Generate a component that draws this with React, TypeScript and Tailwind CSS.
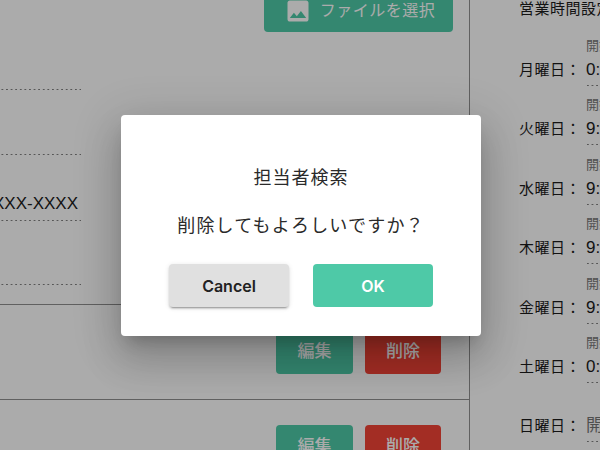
const FONT = "font-['Liberation_Sans','Noto_Sans_CJK_JP',sans-serif]";
const DOTS = "bg-[linear-gradient(to_right,#808080_2px,transparent_2px)] bg-[length:4.6px_1px] bg-bottom bg-repeat-x";

const days = [
  { name: "月曜日", time: "0:00" },
  { name: "火曜日", time: "9:00" },
  { name: "水曜日", time: "9:00" },
  { name: "木曜日", time: "9:00" },
  { name: "金曜日", time: "9:00" },
  { name: "土曜日", time: "0:00" },
];

function FieldLine({ height }: { height: string }) {
  return <div className={`${height} w-[81px] ${DOTS}`} />;
}

function RowActions() {
  return (
    <div className="h-[94.6px] border-t border-[#8f8f8f] pt-[25.6px] pr-[28px] flex justify-end gap-3">
      <button className="w-[77px] h-[43px] rounded bg-[#4ec9a7] text-white text-[17px] font-medium">編集</button>
      <button className="w-[76px] h-[43px] rounded bg-[#f44336] text-white text-[17px] font-medium">削除</button>
    </div>
  );
}

function DayRow({ name, time }: { name: string; time: string }) {
  return (
    <div className="h-[59.4px] flex items-end">
      <span className="w-[67px] shrink-0 whitespace-nowrap text-[15px] leading-[24px] tracking-[0.5px] pb-[4px] text-[#1c1c1c]">{name}：</span>
      <div className={`w-[80px] shrink-0 pb-[4px] ${DOTS}`}>
        <div className="mb-[4px] text-[13px] leading-[16px] whitespace-nowrap text-[#777]">開始時間</div>
        <div className="text-[17px] leading-[24px] text-[#1c1c1c]">{time}</div>
      </div>
    </div>
  );
}

export default function App() {
  return (
    <div className={`relative w-[600px] h-[450px] overflow-hidden bg-white ${FONT}`}>
      <div className="flex h-full">
        <div className="w-[470px] shrink-0 border-r border-[#8f8f8f]">
          <div className="h-[32px] pr-[16px] flex justify-end">
            <button className="w-[189px] h-[32px] rounded-b bg-[#4ec9a7] text-white text-base tracking-[0.5px] pb-[11px] pl-[2px] flex items-center justify-center gap-[8px]">
              <svg viewBox="0 0 24 24" className="w-[28px] h-[28px] fill-white">
                <path d="M21 19V5c0-1.1-.9-2-2-2H5c-1.1 0-2 .9-2 2v14c0 1.1.9 2 2 2h14c1.1 0 2-.9 2-2zM8.500 13.500l2.500 3.010L14.500 12l4.500 6H5l3.500-4.500z" />
              </svg>
              ファイルを選択
            </button>
          </div>
          <FieldLine height="h-[58px]" />
          <FieldLine height="h-[65px]" />
          <div className={`h-[66px] w-[81px] flex items-end justify-end pb-[5px] pr-[3px] ${DOTS}`}>
            <span className="text-[17px] leading-6 whitespace-nowrap text-[#1c1c1c]">0XX-XXXX-XXXX</span>
          </div>
          <FieldLine height="h-[64px]" />
          <div className="h-[19px]" />
          <RowActions />
          <RowActions />
        </div>
        <div className="pl-[49px] flex-1 min-w-0 overflow-hidden">
          <div className="h-[20px] text-[15px] leading-[18px] tracking-[0.5px] whitespace-nowrap text-[#1c1c1c]">営業時間設定</div>
          <div className="pt-[6.6px]">
            {days.map((d) => (
              <DayRow key={d.name} name={d.name} time={d.time} />
            ))}
            <div className="h-[59.4px] flex items-end">
              <span className="w-[67px] shrink-0 whitespace-nowrap text-[15px] leading-[24px] tracking-[0.5px] pb-[4px] text-[#1c1c1c]">日曜日：</span>
              <div className={`w-[80px] shrink-0 pb-[4px] text-[17px] leading-[24px] text-[#777] whitespace-nowrap ${DOTS}`}>開始時間</div>
            </div>
          </div>
        </div>
      </div>

      <div className="absolute inset-0 bg-black/33 flex items-center justify-center">
        <div className="w-[360px] h-[221px] mt-[1px] ml-[2px] rounded bg-white pt-[50px] shadow-[0_11px_15px_-7px_rgba(0,0,0,0.2),0_24px_38px_3px_rgba(0,0,0,0.14),0_9px_46px_8px_rgba(0,0,0,0.12)]">
          <p className="text-center text-lg leading-[27px] tracking-[1px] text-[#2a2a2a]">担当者検索</p>
          <p className="mt-[21px] text-center text-lg leading-[27px] tracking-[1.2px] text-[#2a2a2a]">削除してもよろしいですか？</p>
          <div className="mt-[24px] flex justify-center gap-6">
            <button className="w-[120px] h-[43px] rounded bg-[#e0e0e0] font-['Inter',sans-serif] text-base font-semibold text-[#222] shadow-[0_3px_1px_-2px_rgba(0,0,0,0.2),0_2px_2px_0_rgba(0,0,0,0.14),0_1px_5px_0_rgba(0,0,0,0.12)]">Cancel</button>
            <button className="w-[120px] h-[43px] rounded bg-[#4ec9a7] font-['Inter',sans-serif] text-base font-semibold text-white">OK</button>
          </div>
        </div>
      </div>
    </div>
  );
}
